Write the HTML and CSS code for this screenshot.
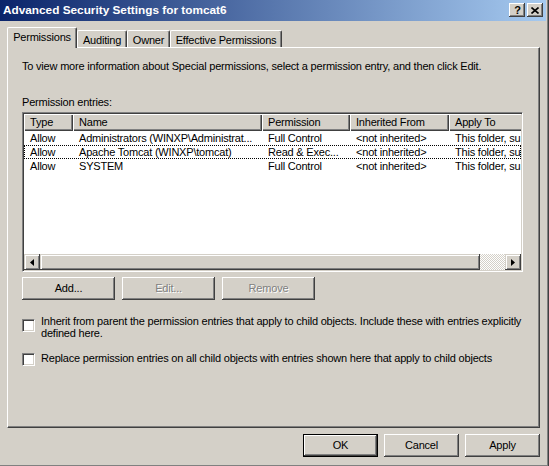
FILE: index.html
```html
<!DOCTYPE html>
<html>
<head>
  <title>Advanced Security Settings for tomcat6</title>
  <meta name="viewport" content="width=device-width, initial-scale=1.0">
  <link rel="stylesheet" href="styles.css">
</head>
<body>
  <div class="window">
    <div class="caption">
      <span class="caption-title">Advanced Security Settings for tomcat6</span>
      <div class="caption-buttons">
        <div class="cap-btn cap-help">?</div>
        <div class="cap-btn cap-close">
          <svg width="8" height="7" viewBox="0 0 8 7"><path d="M0.5 0.5 L7.5 6.5 M7.5 0.5 L0.5 6.5" stroke="#000" stroke-width="1.6" fill="none"/></svg>
        </div>
      </div>
    </div>

    <div class="tabs">
      <div class="tab selected">Permissions</div>
      <div class="tab tab-auditing">Auditing</div>
      <div class="tab tab-owner">Owner</div>
      <div class="tab tab-effective">Effective Permissions</div>
    </div>

    <div class="panel">
      <p class="info">To view more information about Special permissions, select a permission entry, and then click Edit.</p>
      <div class="label">Permission entries:</div>

      <div class="listview">
        <div class="lv-header">
          <div class="hcell col-type">Type</div>
          <div class="hcell col-name">Name</div>
          <div class="hcell col-perm">Permission</div>
          <div class="hcell col-inh">Inherited From</div>
          <div class="hcell col-apply">Apply To</div>
        </div>
        <div class="lv-body">
          <div class="lv-row">
            <div class="cell col-type">Allow</div>
            <div class="cell col-name">Administrators (WINXP\Administrat...</div>
            <div class="cell col-perm">Full Control</div>
            <div class="cell col-inh">&lt;not inherited&gt;</div>
            <div class="cell col-apply">This folder, su</div>
          </div>
          <div class="lv-row focused">
            <div class="cell col-type">Allow</div>
            <div class="cell col-name">Apache Tomcat (WINXP\tomcat)</div>
            <div class="cell col-perm">Read &amp; Exec...</div>
            <div class="cell col-inh">&lt;not inherited&gt;</div>
            <div class="cell col-apply">This folder, su</div>
          </div>
          <div class="lv-row">
            <div class="cell col-type">Allow</div>
            <div class="cell col-name">SYSTEM</div>
            <div class="cell col-perm">Full Control</div>
            <div class="cell col-inh">&lt;not inherited&gt;</div>
            <div class="cell col-apply">This folder, su</div>
          </div>
        </div>
        <div class="hscroll">
          <div class="sb-btn">
            <svg width="4" height="7" viewBox="0 0 4 7"><path d="M4 0 L0 3.5 L4 7 Z" fill="#000"/></svg>
          </div>
          <div class="sb-track"><div class="sb-thumb"></div></div>
          <div class="sb-btn">
            <svg width="4" height="7" viewBox="0 0 4 7"><path d="M0 0 L4 3.5 L0 7 Z" fill="#000"/></svg>
          </div>
        </div>
      </div>

      <div class="btn-row">
        <div class="btn wide">Add...</div>
        <div class="btn wide disabled">Edit...</div>
        <div class="btn wide disabled">Remove</div>
      </div>

      <div class="check check-inherit">
        <div class="box"></div>
        <div class="check-text">Inherit from parent the permission entries that apply to child objects. Include these with entries explicitly<br>defined here.</div>
      </div>
      <div class="check check-replace">
        <div class="box"></div>
        <div class="check-text">Replace permission entries on all child objects with entries shown here that apply to child objects</div>
      </div>
    </div>

    <div class="footer">
      <div class="btn default">OK</div>
      <div class="btn">Cancel</div>
      <div class="btn">Apply</div>
    </div>
  </div>
</body>
</html>
```

FILE: styles.css
```css
html, body {
  margin: 0;
  padding: 0;
  overflow: hidden;
}

body {
  font-family: "Liberation Sans", Arial, sans-serif;
  font-size: 11px;
  letter-spacing: -0.2px;
  color: #000;
  background-color: #d4d0c8;
}

.window {
  width: 549px;
  height: 466px;
  box-sizing: border-box;
  background-color: #d4d0c8;
  box-shadow: inset -1px 0 #404040, inset -2px -1px #808080;
}

/* title bar */
.caption {
  height: 21px;
  margin-right: 3px;
  display: flex;
  align-items: flex-start;
  justify-content: space-between;
  background: linear-gradient(to right, #0a246a, #a6caf0);
}

.caption-title {
  color: #fff;
  font-weight: bold;
  font-size: 11.8px;
  letter-spacing: 0;
  line-height: 21px;
  padding-left: 3px;
}

.caption-buttons {
  display: flex;
  gap: 1px;
  padding-top: 3px;
  padding-right: 3px;
}

.cap-btn {
  width: 16px;
  height: 14px;
  box-sizing: border-box;
  background-color: #d4d0c8;
  box-shadow: inset -1px -1px #404040, inset 1px 1px #fff, inset -2px -2px #808080;
  display: flex;
  align-items: center;
  justify-content: center;
}

.cap-help {
  font-weight: bold;
  font-size: 11px;
  letter-spacing: 0;
  line-height: 14px;
  padding-left: 1px;
}

.cap-close {
  margin-left: 1px;
}

/* tabs */
.tabs {
  display: flex;
  align-items: flex-end;
  height: 21px;
  margin-top: 6px;
  margin-bottom: -1px;
  padding-left: 7px;
  position: relative;
  z-index: 1;
}

.tab {
  height: 17px;
  box-sizing: border-box;
  padding-top: 3px;
  line-height: 13px;
  text-align: center;
  border-top: 1px solid #fff;
  border-left: 1px solid #fff;
  border-right: 1px solid #404040;
  border-radius: 2px 2px 0 0;
  box-shadow: inset -1px 0 #808080;
  background-color: #d4d0c8;
  margin-bottom: 1px;
}

.tab.selected {
  width: 70px;
  height: 21px;
  padding-top: 3px;
  margin-bottom: 0;
}

.tab-auditing { width: 50px; }
.tab-owner { width: 43px; }
.tab-effective { width: 112px; }

/* property page */
.panel {
  width: 533px;
  height: 381px;
  margin-left: 7px;
  box-sizing: border-box;
  border-top: 1px solid #fff;
  border-left: 1px solid #fff;
  border-right: 1px solid #404040;
  border-bottom: 1px solid #404040;
  box-shadow: inset -1px -1px #808080;
  padding: 12px 0 0 14px;
}

.info {
  margin: 0;
  line-height: 13px;
}

.label {
  margin-top: 23px;
  line-height: 13px;
}

/* list view */
.listview {
  margin-top: 3px;
  width: 501px;
  height: 160px;
  box-sizing: border-box;
  border-top: 1px solid #808080;
  border-left: 1px solid #808080;
  border-right: 1px solid #fff;
  border-bottom: 1px solid #fff;
  box-shadow: inset 1px 1px #404040, inset -1px -1px #d4d0c8;
  padding: 1px;
  background-color: #fff;
  display: flex;
  flex-direction: column;
}

.lv-header {
  display: flex;
  height: 17px;
  flex-shrink: 0;
  overflow: hidden;
  background-color: #d4d0c8;
}

.hcell {
  flex-shrink: 0;
  box-sizing: border-box;
  height: 17px;
  line-height: 16px;
  padding-left: 6px;
  white-space: nowrap;
  box-shadow: inset 1px 1px #fff, inset -1px -1px #404040, inset -2px -2px #808080;
}

.col-type { width: 49px; }
.col-name { width: 189px; }
.col-perm { width: 88px; }
.col-inh { width: 99px; }
.col-apply { width: 120px; }

.lv-body {
  flex: 1;
  overflow: hidden;
}

.lv-row {
  display: flex;
  height: 14px;
  line-height: 14px;
  box-sizing: border-box;
}

.lv-row.focused {
  outline: 1px dotted #000;
  outline-offset: -1px;
}

.cell {
  flex-shrink: 0;
  box-sizing: border-box;
  padding-left: 6px;
  white-space: nowrap;
  overflow: hidden;
}

/* horizontal scroll bar */
.hscroll {
  display: flex;
  height: 16px;
  flex-shrink: 0;
  background-image: conic-gradient(#fff 25%, #d4d0c8 0 50%, #fff 0 75%, #d4d0c8 0);
  background-size: 2px 2px;
}

.sb-btn {
  width: 16px;
  height: 16px;
  flex-shrink: 0;
  background-color: #d4d0c8;
  box-shadow: inset -1px -1px #404040, inset 1px 1px #d4d0c8, inset 2px 2px #fff, inset -2px -2px #808080;
  display: flex;
  align-items: center;
  justify-content: center;
}

.sb-track {
  flex: 1;
}

.sb-thumb {
  width: 440px;
  height: 16px;
  background-color: #d4d0c8;
  box-shadow: inset -1px -1px #404040, inset 1px 1px #d4d0c8, inset 2px 2px #fff, inset -2px -2px #808080;
}

/* buttons */
.btn {
  width: 75px;
  height: 23px;
  box-sizing: border-box;
  line-height: 22px;
  text-align: center;
  background-color: #d4d0c8;
  box-shadow: inset -1px -1px #404040, inset 1px 1px #fff, inset -2px -2px #808080;
}

.btn.wide {
  width: 93px;
}

.btn.disabled {
  color: #808080;
  text-shadow: 1px 1px #fff;
}

.btn.default {
  box-shadow: inset 0 0 0 1px #000, inset -2px -2px #404040, inset 2px 2px #fff, inset -3px -3px #808080;
}

.btn-row {
  display: flex;
  gap: 7px;
  margin-top: 5px;
}

/* check boxes */
.check {
  display: flex;
  gap: 6px;
  line-height: 12px;
}

.check-inherit {
  margin-top: 15px;
}

.check-replace {
  margin-top: 13px;
}

.box {
  width: 13px;
  height: 13px;
  flex-shrink: 0;
  box-sizing: border-box;
  background-color: #fff;
  border-top: 1px solid #808080;
  border-left: 1px solid #808080;
  border-right: 1px solid #fff;
  border-bottom: 1px solid #fff;
  box-shadow: inset 1px 1px #404040, inset -1px -1px #d4d0c8;
}

.check-inherit .box {
  margin-top: 4px;
}

.check-replace .box {
  margin-top: 1px;
}

/* dialog buttons */
.footer {
  display: flex;
  justify-content: flex-end;
  gap: 6px;
  margin-top: 6px;
  padding-right: 9px;
}
```
